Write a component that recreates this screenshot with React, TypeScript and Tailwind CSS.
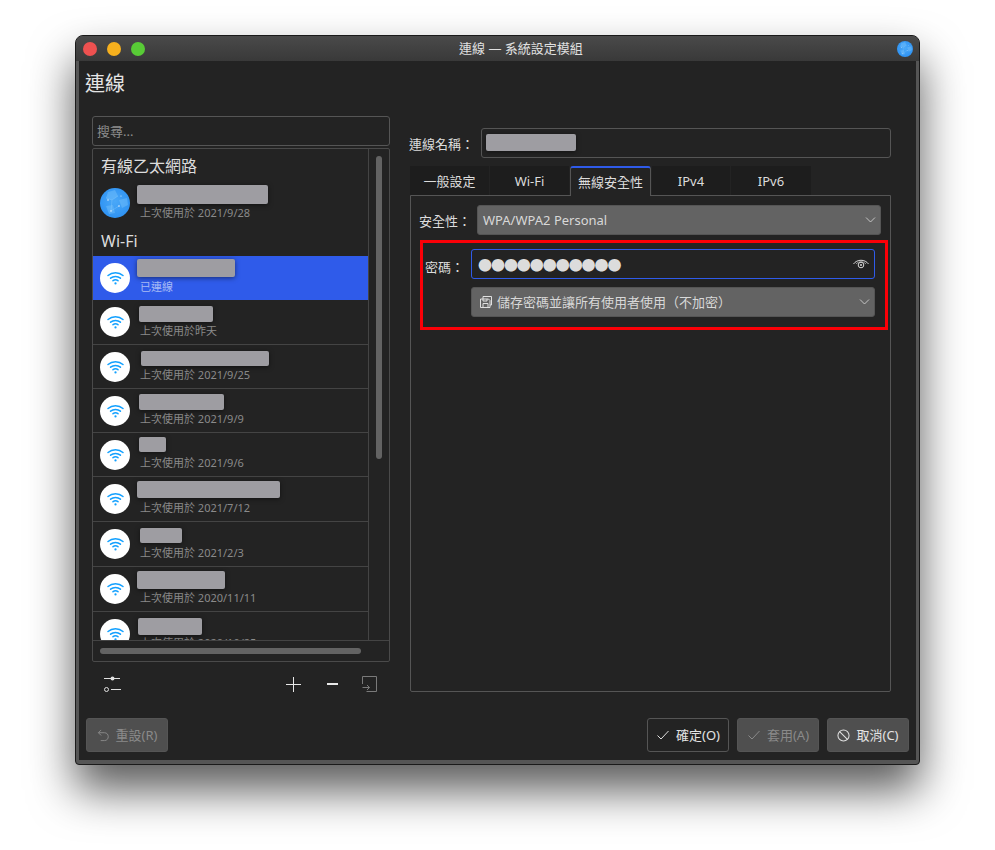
import type { ReactNode } from 'react';

const rows = [
    { sub: '已連線', h: 'h-[44px]', blur: 'left-[44px] top-[3px] w-[98px] h-[18px]', active: true },
    { sub: '上次使用於昨天', h: 'h-[45px]', blur: 'left-[46px] top-[6px] w-[74px] h-[16px]' },
    { sub: '上次使用於 2021/9/25', h: 'h-[44px]', blur: 'left-[48px] top-[6px] w-[128px] h-[15px]' },
    { sub: '上次使用於 2021/9/9', h: 'h-[44px]', blur: 'left-[46px] top-[5px] w-[85px] h-[16px]' },
    { sub: '上次使用於 2021/9/6', h: 'h-[44px]', blur: 'left-[46px] top-[4px] w-[27px] h-[15px]' },
    { sub: '上次使用於 2021/7/12', h: 'h-[45px]', blur: 'left-[44px] top-[4px] w-[143px] h-[17px]' },
    { sub: '上次使用於 2021/2/3', h: 'h-[45px]', blur: 'left-[47px] top-[6px] w-[42px] h-[15px]' },
    { sub: '上次使用於 2020/11/11', h: 'h-[45px]', blur: 'left-[44px] top-[4px] w-[88px] h-[18px]' },
    { sub: '上次使用於 2020/10/25', h: 'h-[45px]', blur: 'left-[45px] top-[6px] w-[64px] h-[17px]' },
];

function Globe({ size, id }: { size: string; id: string }) {
    return (
        <svg viewBox="0 0 30 30" className={size}>
            <defs>
                <radialGradient id={id} cx="50%" cy="45%" r="55%">
                    <stop offset="0%" stopColor="#4aa8f8" />
                    <stop offset="100%" stopColor="#2f93f3" />
                </radialGradient>
            </defs>
            <circle cx="15" cy="15" r="15" fill={`url(#${id})`} />
            <path d="M8 4 L15 2 L18 8 L12 12 L6 10 Z M19 12 L27 10 L28 17 L22 20 Z M6 18 L13 17 L15 25 L9 26 Z" fill="#6dbcfa" opacity="0.55" />
            <path d="M6 10 L12 12 L18 8 M12 12 L11 23 L19 18" stroke="#8ccdfb" strokeWidth="0.5" fill="none" opacity="0.7" />
            <circle cx="8" cy="12" r="0.7" fill="#fff" />
            <circle cx="19" cy="18" r="0.7" fill="#fff" />
            <circle cx="11" cy="23" r="0.7" fill="#fff" />
            <circle cx="21" cy="8" r="0.5" fill="#fff" />
        </svg>
    );
}

function Wifi() {
    return (
        <div className="w-[30px] h-[30px] rounded-full bg-white flex items-center justify-center shrink-0">
            <svg viewBox="0 0 18 15" className="w-[17px] h-[14px]" fill="none" stroke="#12a0ff" strokeWidth="1.6" strokeLinecap="round">
                <path d="M1 4.8 C5.4 0.9 12.6 0.9 17 4.8" />
                <path d="M3.7 7.7 C6.6 5.2 11.4 5.2 14.3 7.7" />
                <path d="M6.3 10.4 C7.7 9.3 10.3 9.3 11.7 10.4" />
                <circle cx="9" cy="13.3" r="1.2" fill="#12a0ff" stroke="none" />
            </svg>
        </div>
    );
}

function Blur({ className }: { className: string }) {
    return <div className={`absolute rounded-[2px] bg-[#9e9da2] shadow-[0_1px_5px_rgba(0,0,0,0.5)] ${className}`} />;
}

function Chevron() {
    return (
        <svg viewBox="0 0 10 6" className="w-[11px] h-[6px] ml-auto" fill="none" stroke="#d0d0d0" strokeWidth="0.9">
            <path d="M0.5 0.5 L5 5 L9.5 0.5" />
        </svg>
    );
}

function Combo({ children, className }: { children: ReactNode; className: string }) {
    return (
        <div className={`h-[30px] flex items-center rounded-[3px] border border-[#555] bg-[#636363] text-[13px] text-[#d8d8d8] pr-[4px] ${className}`}>
            {children}
            <Chevron />
        </div>
    );
}

function Btn({ children, icon, disabled, className }: { children: ReactNode; icon: ReactNode; disabled?: boolean; className?: string }) {
    return (
        <div className={`w-[82px] h-[34px] flex items-center justify-center gap-[6px] rounded-[3px] border border-[#555] text-[13px] ${disabled ? 'bg-[#4f4f4f] text-[#8a8a8a]' : 'text-[#e4e4e4]'} ${className || ''}`}>
            {icon}
            <span className="pt-[2px]">{children}</span>
        </div>
    );
}

const Check = ({ color }: { color: string }) => (
    <svg viewBox="0 0 14 12" className="w-[14px] h-[12px]" fill="none" stroke={color} strokeWidth="1">
        <path d="M1.5 6.5 L5 10 L12.5 2" />
    </svg>
);

function Tab({ label, active, className }: { label: string; active?: boolean; className: string }) {
    return (
        <div className={`h-[29px] flex items-center justify-center pt-[2px] text-[13px] text-[#dcdcdc] ${className} ${active ? 'bg-[#232323] border border-[#555] border-b-0 border-t-2 border-t-[#2f5bea] rounded-t-[3px] h-[30px] -mb-px z-10' : 'bg-[#1d1d1d]'}`}>
            {label}
        </div>
    );
}

export default function App() {
    return (
        <div className="w-[995px] h-[850px] bg-white pt-[35px] pl-[75px] overflow-hidden font-['Noto_Sans','Noto_Sans_CJK_TC',sans-serif]">
            <div className="w-[845px] h-[730px] flex flex-col rounded-t-[8px] rounded-b-[4px] bg-[#555] border border-[#1a1a1a] shadow-[0_25px_45px_rgba(0,0,0,0.65)]">
                {/* title bar */}
                <div className="h-[25px] shrink-0 rounded-t-[7px] bg-gradient-to-b from-[#4a4a4a] to-[#393939] flex items-center pl-[7px] pr-[6px]">
                    <div className="flex gap-[10px]">
                        <div className="w-[14px] h-[14px] rounded-full bg-[#ee5150]" />
                        <div className="w-[14px] h-[14px] rounded-full bg-[#f6b01e]" />
                        <div className="w-[14px] h-[14px] rounded-full bg-[#58cb36]" />
                    </div>
                    <div className="flex-1 text-center text-[13px] text-[#e0e0e0]">連線 — 系統設定模組</div>
                    <Globe id="g1" size="w-[16px] h-[16px]" />
                </div>

                <div className="flex-1 flex flex-col mx-[3px] mb-[4px] bg-[#232323] text-[#dcdcdc]">
                    <div className="h-[55px] shrink-0 pl-[6px] pt-[8px] text-[20px] leading-[30px] text-[#e4e4e4]">連線</div>

                    <div className="flex-1 flex pl-[13px]">
                        {/* left column */}
                        <div className="w-[298px] flex flex-col">
                            <div className="h-[30px] flex items-center pl-[4px] pt-[2px] rounded-[3px] border border-[#555] text-[13px] text-[#8d8d8d]">搜尋...</div>
                            <div className="h-[514px] mt-[2px] rounded-[2px] border border-[#4a4a4a] flex flex-col">
                                <div className="h-[492px] flex border-b border-[#444]">
                                    <div className="w-[276px] border-r border-[#444] overflow-hidden">
                                        <div className="h-[32px] pl-[8px] text-[16px] leading-[34px]">有線乙太網路</div>
                                        <div className="relative h-[44px] flex items-center pl-[7px]">
                                            <Globe id="g2" size="w-[30px] h-[30px] shrink-0" />
                                            <span className="ml-[10px] mt-[20px] text-[11px] text-[#8a8a8a]">上次使用於 2021/9/28</span>
                                            <Blur className="left-[44px] top-[4px] w-[131px] h-[19px]" />
                                        </div>
                                        <div className="h-[31px] pl-[8px] text-[16px] leading-[32px]">Wi-Fi</div>
                                        {rows.map((r) => (
                                            <div key={r.sub} className={`relative ${r.h} flex items-center pl-[7px] ${r.active ? 'bg-[#2f5bea]' : 'border-b border-[#444]'}`}>
                                                <Wifi />
                                                <span className={`ml-[10px] mt-[18px] text-[11px] whitespace-nowrap ${r.active ? 'text-[#a9bcf5]' : 'text-[#8a8a8a]'}`}>{r.sub}</span>
                                                <Blur className={r.blur} />
                                            </div>
                                        ))}
                                    </div>
                                    <div className="pl-[7px] pt-[7px]">
                                        <div className="w-[6px] h-[303px] rounded-full bg-[#636363]" />
                                    </div>
                                </div>
                                <div className="w-[261px] h-[6px] ml-[7px] mt-[7px] rounded-full bg-[#636363]" />
                            </div>
                            {/* toolbar */}
                            <div className="h-[24px] mt-[10px] flex items-center pl-[12px]">
                                <svg viewBox="0 0 17 16" className="w-[17px] h-[16px]" fill="none" stroke="#e0e0e0" strokeWidth="1">
                                    <path d="M0 2.5 H16 M7 13.5 H17" />
                                    <circle cx="8.5" cy="2.5" r="2" fill="#e0e0e0" stroke="none" />
                                    <circle cx="2.5" cy="13.5" r="2" />
                                </svg>
                                <svg viewBox="0 0 15 15" className="w-[15px] h-[15px] ml-[165px]" fill="none" stroke="#e8e8e8" strokeWidth="1">
                                    <path d="M0 7.5 H15 M7.5 0 V15" />
                                </svg>
                                <div className="w-[11px] h-[2px] bg-[#e8e8e8] ml-[26px]" />
                                <svg viewBox="0 0 15 16" className="w-[15px] h-[16px] ml-[24px]" fill="none" stroke="#7a7a7a" strokeWidth="1">
                                    <path d="M0.5 8 V0.5 H14.5 V15.5 H4.5 M0.5 11.5 H7.5 M5 9 L7.5 11.5 L5 14" />
                                </svg>
                            </div>
                        </div>

                        {/* right column */}
                        <div className="w-[482px] ml-[19px] pt-[12px] flex flex-col">
                            <div className="h-[30px] flex items-center">
                                <span className="w-[72px] pt-[3px] text-[13px]">連線名稱：</span>
                                <div className="relative flex-1 h-[30px] rounded-[3px] border border-[#555]">
                                    <Blur className="left-[4px] top-[5px] w-[90px] h-[17px]" />
                                </div>
                            </div>
                            <div className="flex mt-[8px] ml-[1px] items-start">
                                <Tab label="一般設定" className="w-[79px] mr-px" />
                                <Tab label="Wi-Fi" className="w-[79px] mr-px" />
                                <Tab label="無線安全性" active className="w-[81px] mr-px" />
                                <Tab label="IPv4" className="w-[78px] mr-px" />
                                <Tab label="IPv6" className="w-[80px]" />
                            </div>
                            <div className="ml-[1px] h-[497px] rounded-b-[2px] border border-[#555] pt-[9px]">
                                <div className="flex items-center ml-[8px] mr-[9px]">
                                    <span className="w-[58px] pt-[3px] text-[13px]">安全性：</span>
                                    <Combo className="flex-1 pl-[5px]"><span className="pt-[2px]">WPA/WPA2 Personal</span></Combo>
                                </div>
                                <div className="ml-[9px] mt-[5px] w-[468px] h-[90px] border-[3px] border-[#fb0007] pt-[6px] pr-[10px]">
                                    <div className="flex items-center h-[30px]">
                                        <span className="w-[48px] pl-[2px] pt-[7px] text-[13px]">密碼：</span>
                                        <div className="flex-1 h-[30px] rounded-[3px] border border-[#2f5bea] flex items-center pl-[6px] pr-[5px]">
                                            <span className="text-[14px] tracking-[-1.05px] text-[#dcdcdc] font-['Noto_Sans_CJK_TC',sans-serif]">●●●●●●●●●●●</span>
                                            <svg viewBox="0 0 16 12" className="w-[16px] h-[12px] ml-auto" fill="none" stroke="#d8d8d8" strokeWidth="1">
                                                <path d="M0.5 6 C4 1 12 1 15.5 6" />
                                                <path d="M3 6 C5.5 3 10.5 3 13 6" strokeWidth="0.6" />
                                                <circle cx="8" cy="7" r="2.8" />
                                                <circle cx="8" cy="7" r="1" fill="#d8d8d8" stroke="none" />
                                            </svg>
                                        </div>
                                    </div>
                                    <div className="pl-[48px] mt-[8px]">
                                        <Combo className="pl-[8px]">
                                            <svg viewBox="0 0 12 12" className="w-[12px] h-[12px] mr-[5px]" fill="none" stroke="#e0e0e0" strokeWidth="1">
                                                <path d="M0.5 3 H8.5 L10 4.5 V11.5 H0.5 Z M3 3 V0.5 H11.5 V9 H10 M3 11.5 V7.5 H8 V11.5 M3 3 V5 H7 V3" />
                                            </svg>
                                            <span className="pt-[2px]">儲存密碼並讓所有使用者使用（不加密）</span>
                                        </Combo>
                                    </div>
                                </div>
                            </div>
                        </div>
                    </div>

                    {/* footer */}
                    <div className="h-[34px] shrink-0 mb-[8px] mx-[7px] flex">
                        <Btn disabled icon={
                            <svg viewBox="0 0 14 14" className="w-[13px] h-[13px]" fill="none" stroke="#8a8a8a" strokeWidth="1">
                                <path d="M4.5 1 L1.5 4 L4.5 7 M1.5 4 H8 C13.5 4 13.5 12.5 8 12.5 H4" />
                            </svg>
                        }>重設(R)</Btn>
                        <div className="ml-auto flex gap-[8px]">
                            <Btn icon={<Check color="#e0e0e0" />}>確定(O)</Btn>
                            <Btn disabled icon={<Check color="#8a8a8a" />}>套用(A)</Btn>
                            <Btn className="bg-[#4f4f4f]" icon={
                                <svg viewBox="0 0 14 14" className="w-[13px] h-[13px]" fill="none" stroke="#e0e0e0" strokeWidth="1.1">
                                    <circle cx="7" cy="7" r="6" />
                                    <path d="M2.8 2.8 L11.2 11.2" />
                                </svg>
                            }>取消(C)</Btn>
                        </div>
                    </div>
                </div>
            </div>
        </div>
    );
}
